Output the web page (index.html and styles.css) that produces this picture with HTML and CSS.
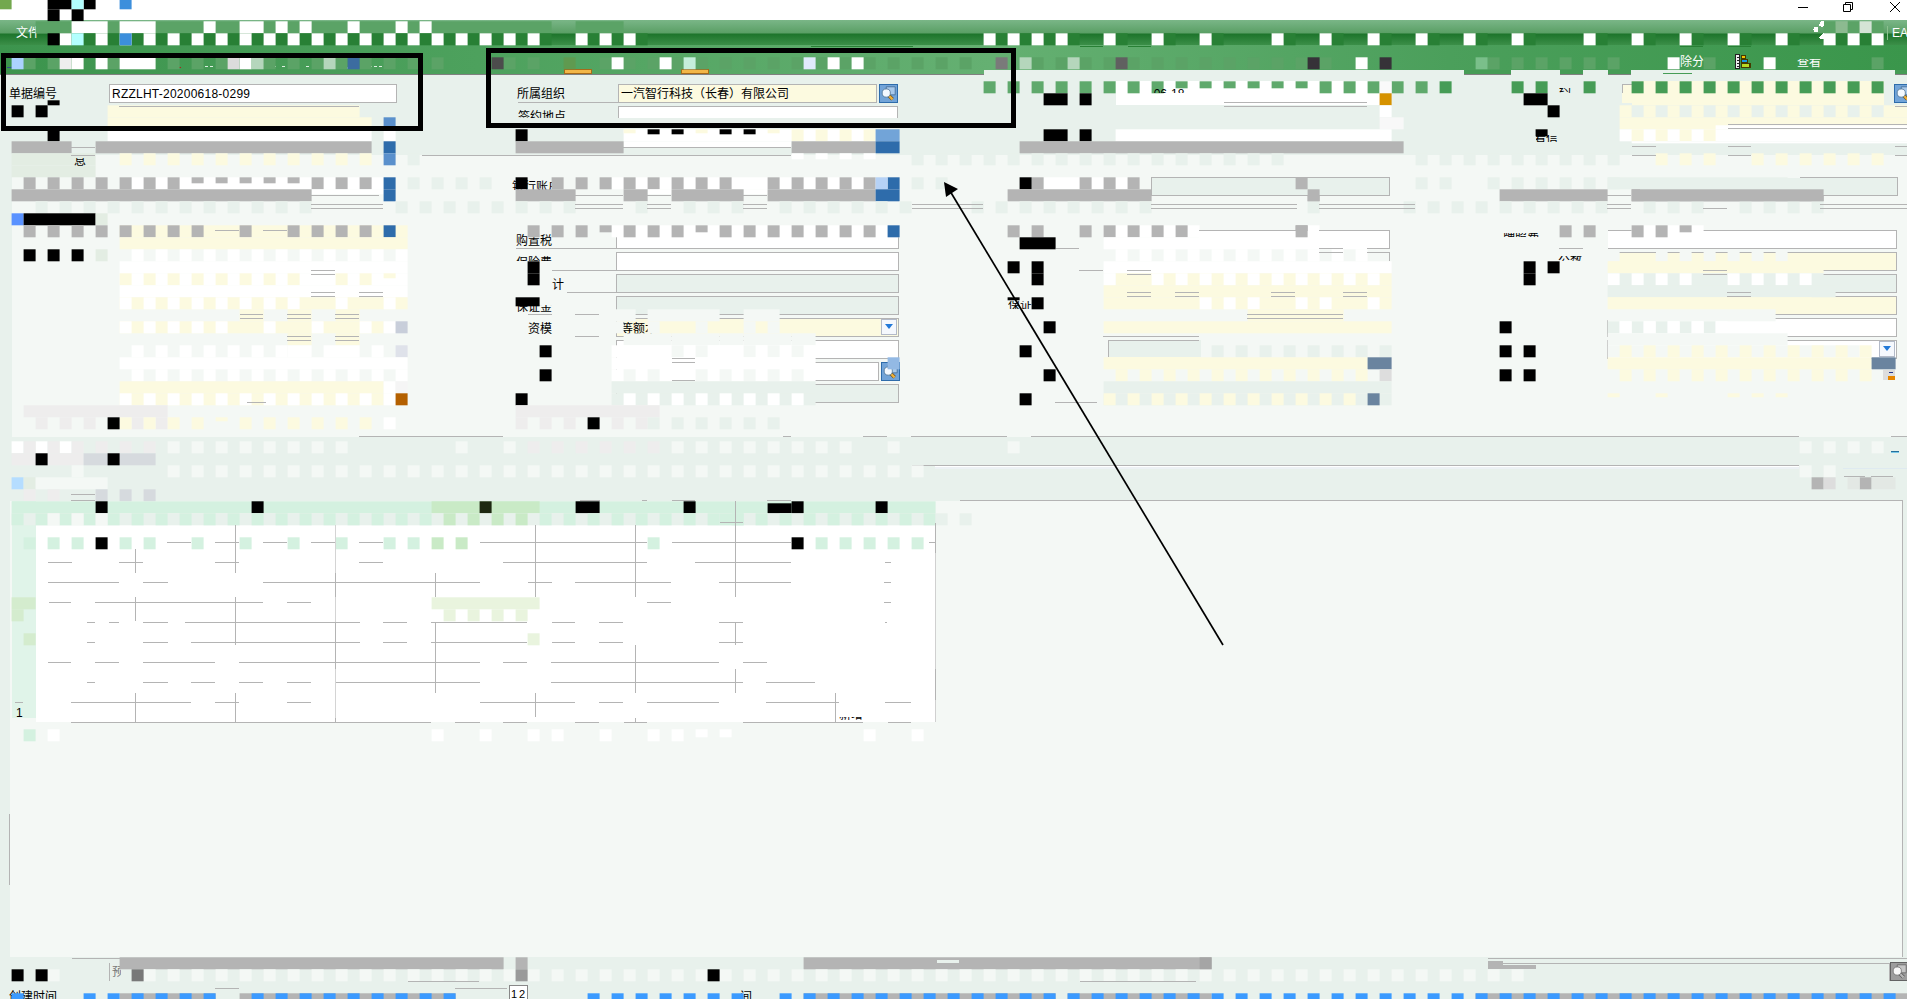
FILE: index.html
```html
<!DOCTYPE html>
<html lang="zh-CN">
<head>
<meta charset="utf-8">
<title>EAS</title>
<link rel="stylesheet" href="styles.css">
</head>
<body>
<div class="window">
  <header class="titlebar">
    <svg class="winbtns" viewBox="0 0 110 20" width="110" height="20"><g fill="none" stroke="#000" stroke-width="1"><path d="M1 7.500h10M46.500 4.500h7v7h-7zM48.500 4.500v-2h7v7h-2M93 2l10 10M103 2l-10 10"/></g></svg>
  </header>
  <nav class="menubar"><span>文件</span><span class="brand">EA</span></nav>
  <div class="toolbar"><span class="tool-a">除分</span>
    <svg width="16" height="16" viewBox="0 0 16 16"><path fill="#222" d="M0 0h5v15H0z"/><path fill="#eee" d="M1 1h3v13H1z"/><path stroke="#222" d="M2 3.500h2M2 6.500h2M2 9.500h2M2 12.500h2"/><path fill="#453a00" d="M6 1h5v4h2v4h3v5H6z"/><path fill="#f5c400" d="M7 2h3v2H7z"/><path fill="#169be8" d="M7 6h5v2H7z"/><path fill="#b8dc25" d="M7 10h7v3H7z"/></svg>
    <span class="tool-b">查看</span></div>
  <section class="head">
    <div class="hrow">
      <label class="l1">单据编号</label><div class="f f1">RZZLHT-20200618-0299</div>
      <label class="l2">所属组织</label><div class="f f2 req">一汽智行科技（长春）有限公司</div><span class="look"><svg viewBox="0 0 19 19"><use href="#lens"/></svg></span>
      <span class="look last"><svg viewBox="0 0 19 19"><use href="#lens"/></svg></span>
    </div>
    <div class="hrow second"><label>签约地点</label><div class="f"></div></div>
  </section>
  <section class="body">
    <div class="acct"><label>银行账户</label></div>
    <div class="fields">
      <div class="pair"><label class="cut">购置税</label><div class="f"></div></div><div class="f w"></div>
      <div class="pair"><label class="top">保险费</label><div class="f"></div></div><div class="f w req"></div>
      <div class="pair"><label class="ji">计</label><div class="f off"></div></div><div class="f w off"></div>
      <div class="pair"><label class="low">保证金</label><div class="f off"></div></div><div class="f w req"></div>
      <div class="pair"><label class="zi">资模</label><div class="f req sel"><span>等额本</span><b class="drop"></b></div></div><div class="f w"></div>
      <div class="pair"><label></label><div class="f"></div></div><div class="f w open"><b class="drop"></b></div>
      <div class="pair"><label></label><div class="f short"></div><span class="look"><svg viewBox="0 0 19 19"><use href="#lens"/></svg></span></div><div></div>
      <div class="pair"><label></label><div class="f off"></div></div><div></div>
    </div>
  </section>
  <section class="tabs"></section>
  <section class="sheet"></section>
  <footer class="foot"><div class="frow"><span class="small">预</span><span class="look grey"><svg viewBox="0 0 19 19"><use href="#lens"/></svg></span></div>
  <div class="frow times"><span>创建时间</span><span class="cal">12</span><span class="t2">间</span></div></footer>
</div>
<svg width="0" height="0" class="defs"><defs><g id="lens"><path d="M7 2h10v9H7z" fill="#a9c9ea" stroke="#46709c"/><path d="M10 12l4 4" stroke="#6b4a1c" stroke-width="4"/><path d="M10 12l4 4" stroke="#f0b238" stroke-width="2.600"/><circle cx="7" cy="9" r="4.600" fill="#f3f9ff" stroke="#5b7d9c"/></g></defs></svg>
<svg id="mosaic" class="overlay" width="1907" height="999" shape-rendering="crispEdges"></svg>
<svg class="overlay" width="1907" height="999">
  <g class="frag">
    <svg x="1143" y="89" width="60" height="4"><text x="0" y="9">..-06-18</text></svg>
    <svg x="1559" y="88" width="14" height="5"><text x="0" y="7">约</text></svg>
    <svg x="1536" y="135" width="22" height="7"><text x="-2" y="8">看信</text></svg>
    <svg x="71" y="158" width="16" height="8"><text x="3" y="7">息</text></svg>
    <svg x="1503" y="233" width="36" height="4"><text x="0" y="9">牌照费</text></svg>
    <svg x="1558" y="256" width="28" height="5"><text x="0" y="9">公数</text></svg>
    <svg x="1008" y="301" width="24" height="8"><text x="0" y="9">保证</text></svg>
    <svg x="839" y="717" width="24" height="3"><text x="0" y="2">新增</text></svg>
    <text x="16" y="717">1</text>
  </g>
  <g fill="none" stroke="#000" stroke-width="5"><rect x="3.500" y="55.500" width="417" height="73"/><rect x="488.500" y="50.500" width="525" height="75"/></g>
  <path d="M950 191L1223 645" stroke="#000" stroke-width="1.700"/><path d="M944 182l14 7-12 8z"/>
</svg>
<script src="mosaic.js"></script>
</body>
</html>
```
FILE: styles.css
```css
*{box-sizing:border-box}
body{margin:0;width:1907px;height:999px;overflow:hidden;background:#e8f1ec;font:12px/14px "Liberation Sans","Noto Sans CJK SC",sans-serif;color:#000}
.window{display:flex;flex-direction:column;width:1907px;height:999px}
.titlebar{height:20px;background:#fff;display:flex;justify-content:flex-end}
.winbtns{margin-right:0}
.menubar{height:25px;padding:6px 0 0 16px;display:flex;justify-content:space-between;color:#fff;background:linear-gradient(#7ab687 0,#5a9f65 13px,#1d742b 14px,#3b8f48 25px)}
.brand{width:20px;border-left:1px solid #8bc18f;padding-left:4px;overflow:hidden;white-space:nowrap;height:14px}
.toolbar{height:30px;display:flex;align-items:flex-start;padding:9px 0 0 1680px;color:#fff;background:linear-gradient(90deg,#3c944d,#4da15d 25%,#65b072 52%,#4b9f5b 76%,#3a964b);border-bottom:1px solid #808080}
.toolbar span{padding-top:1px}
.toolbar svg{margin-left:31px}
.tool-b{margin-left:46px;clip-path:inset(5px 0 0 0)}
.head{height:80px;padding-top:9px}
.hrow{display:flex;height:19px;align-items:center}
.f{height:19px;border:1px solid #b4b4b4;background:#fff;padding:2px 2px;white-space:nowrap}
.req{background:#fcfae0}
.off{background:#e8f1ec}
.l1{width:101px;padding:1px 0 0 9px}
.f1{width:288px;margin-left:8px;letter-spacing:.24px}
.l2{width:101px;padding-top:1px;margin-left:120px}
.f2{width:259px}
.look{flex:none;width:19px;height:19px;border:1px solid #2e6cab;background:#72a4d8;margin-left:2px;display:block}
.look svg{display:block;width:17px;height:17px}
.look.last{margin-left:996px;margin-right:-10px}
.grey{filter:grayscale(1)}
.second{padding-left:518px;margin-top:3px;height:12px;overflow:hidden;align-items:flex-start}
.second label{width:100px;padding-top:4px}
.second .f{width:280px}
.body{height:282px;margin-left:12px;background:#f4f8f5}
.acct{height:75px;padding:25px 0 0 500px}
.acct label{display:block;width:50px;height:10px;overflow:hidden}
.fields{display:grid;grid-template-columns:1091px 291px;grid-auto-rows:19px;row-gap:3px;padding-left:504px}
.fields .w{width:290px}
.pair{display:flex}
.pair label{width:100px;padding-top:4px}
.pair .f{width:283px}
.pair .short{width:263px}
.pair .cut{clip-path:inset(4px 0 3px 0)}
.pair .top{clip-path:inset(0 0 10px 0)}
.pair .ji{padding-left:36px}
.pair .low{clip-path:inset(9px 0 0 0)}
.pair .zi{padding-left:12px}
.sel,.open{display:flex;justify-content:space-between;padding:0 1px 0 4px}
.sel span{padding-top:3px}
.open{justify-content:flex-end}
.drop{width:16px;height:16px;border:1px solid #b3bac8;background:#f5f8fd;display:flex;align-items:center;justify-content:center}
.drop::after{content:"";border:4px solid transparent;border-top:5px solid #2379d8;border-bottom:0}
.tabs{height:64px;background:#e8f1ec}
.sheet{height:457px;margin-left:10px;margin-right:4px;background:#f4f8f5;border-right:1px solid #b4b4b4}
.foot{height:42px}
.frow{display:flex;justify-content:space-between;height:20px;padding:5px 0 0 112px}
.small{width:9px;overflow:hidden;color:#777;padding-top:3px;height:18px}
.frow .look{margin-right:-2px}
.times{padding:13px 0 0 9px;justify-content:flex-start}
.times span{white-space:nowrap;width:50px}
.times .cal{margin-left:450px;width:19px;border:1px solid #888;background:#fff;font-size:11px;letter-spacing:2px;height:18px;margin-top:-5px;padding:1px 0 0 1px}
.times .t2{margin-left:212px}
.defs{display:block;height:0}
.overlay{position:absolute;left:0;top:0}
.frag text{font:12px "Liberation Sans","Noto Sans CJK SC",sans-serif}
```
FILE: mosaic.js
```javascript
const C={k:'#000',w:'#fff',c:'#b3ffff',b:'#3c8fdc',g:'#5ba366',d:'#288035',G:'#b4b4b4',y:'#fcfae0',B:'#2e6cab',M:'#5a90cc',p:'#f4f8f5',e:'#e8f1ec',E:'#eeeded',m:'#d4f1e0',n:'#c9eac6',l:'#e9f4de',s:'#6a849f',t:'#d6dade',v:'#e3ede3',a:'#d4ecce',L:'#3b9aff',r:'#469c56',q:'#5fa96c'};
const svg=document.getElementById('mosaic'),NS=svg.namespaceURI;
function rect(x,y,w,h,f,soft){const r=document.createElementNS(NS,'rect');for(const [k,v] of Object.entries({x,y,width:w,height:h,fill:C[f]||f}))r.setAttribute(k,v);if(soft)r.setAttribute('shape-rendering','geometricPrecision');svg.append(r)}
// Cells are 12px square; a spec is a list of "a", "a-b" or "a-b/step".
function cells(j,f,spec,h=12,dy=0){for(const s of spec.split(',')){const [r,st]=s.split('/'),[a,b=a]=r.split('-').map(Number);const y=9.3+j*12+dy;if(st)for(let k=a;k<=b;k+=+st)rect(k*12-.4,y,12,h,f,1);else rect(a*12-.4,y,(b-a+1)*12,h,f,1)}}
const H=(y,s)=>s.split(',').forEach(p=>{const [a,b]=p.split('-').map(Number);rect(a,y,b-a,1,'G')});
const V=(x,s)=>s.split(',').forEach(p=>{const [a,b]=p.split('-').map(Number);rect(x,a,1,b-a,'G')});
const box=(x,y,w,h,f)=>{rect(x,y,w,h,'G');rect(x+1,y+1,w-2,h-2,f)};
// Area grounds
rect(984,70,923,5,'e');
for(const [x,w] of [[1464,47],[1560,23],[1608,23],[1895,12]]){rect(x,70,w,4,'r');rect(x,74,w,1,'#808080')}
rect(1663,73,29,1,'r');
rect(811,46,102,1,'d');rect(1080,46,23,1,'d');rect(1128,46,23,1,'d');rect(1680,46,23,1,'d');rect(1728,46,23,1,'d');
rect(564,69,28,5,'#a76b19');rect(565,70,26,3,'#f2b648');rect(681,69,28,5,'#a76b19');rect(682,70,26,3,'#f2b648');
// Toolbar caption remnants
for(const x of [192,196,200,205,210,273,282,290,306,312,320,364,369,374,379])rect(x,66,3,1,'#dff0e2');
rect(7,67,13,1,'#34508c');rect(116,68,13,1,'#34508c');rect(179,67,2,1,'#b02020');rect(240,67,8,2,'#a58a8e');rect(345,67,10,2,'#a9cdf5');
rect(1116,81,264,24,'w');H(84,'1622-1632');rect(1622,85,200,18,'y');V(1622,'84-93');rect(1632,81,252,24,'y');
H(102,'518-618');
rect(1604,225,4,95,'p');
const rows=[
[-1,'#73a84e','0'],[-1,'k','4-5,7'],[-1,'c','6'],[-1,'b','10'],[0,'k','4,6'],
[1,'g','3-5,9,13-16,18-19,22,24,26-28,30-32,34,36-45,48-51,152,154,156'],[1,'w','6-8,10-12,17,20-21,23,25,29,33,35'],[1,'#8cba90','153'],[1,'#d4e4d6','155'],
[2,'d','7-45/2,49-53/2,83-89/2,93,97,101,107-119/4,123,127,133-149/4,153,155'],[2,'w','5,8-44/2,48-52/2,82-88/2,92,96,100,106-122/4,126,132-148/4,152-156/2'],[2,'k','4'],[2,'c','6'],[2,'b','10'],
[4,'g','2,4,9,14-36/2,42,44,50-80/2,86-110/2,124-134/2,142,156'],[4,'#acd2ff','1'],[4,'#eee','5'],[4,'w','6,8,10-12,20,51,55,69,71,113,139,147'],[4,'#dcdcdc','19'],[4,'#b5d6bc','21,27,85,89'],[4,'#3c6ca0','29'],[4,'#4c4c4c','41'],[4,'#5f9a50','47'],[4,'#c5eedb','57'],[4,'#e1eafc','67'],[4,'#7a7a7a','83'],[4,'#606060','93'],[4,'#363238','109,115'],[4,'#7abf8a','123'],
[6,'q','82-96/2,110-118/2'],[6,'q','98-108/2',7],[6,'r','120,126,128,132,136-156/2'],[6,'#fafafa','115'],
[7,'k','87-88,90,127-128'],[7,'#d69200','115'],[7,'k','4',5,7],[8,'w','115'],[9,'#f8f8f8','115-116'],
[8,'y','9-29,135-158'],[8,'e','136-156/2'],[8,'k','1,3,129'],[9,'y','9-30,135-158'],[9,'M','32'],[9,'w','143-158',4,8],
[10,'k','4,43,87-88,90'],[10,'w','9-30,32,52-72,93-115,135-158'],[10,'y','66-72/2,136-142/2'],[10,'y','52,58,64',4],[10,'k','54,56,60,62',5],[10,'k','128',7],[10,'#72a4d8','73-74'],
[11,'w','52-65',6],[11,'w','136-158',2],[11,'G','1-5,8-30,43-51,66-72,85-116'],[11,'B','32,73-74'],
[12,'v','1-7'],[13,'v','1-7'],[12,'y','10-30/2,138-142/2,146-156/2'],[12,'M','32'],[12,'w','66-72/2',6],[12,'e','34,76-106/2,118-134/2'],
[14,'w','11-31,51-72,87-93'],[14,'e','34-38/2,40,76,78,118,120,124-134/2,134-148'],[14,'G','2-14/2,26-30/2,46,48,50-60/2,64-72/2,86,90-94/2'],[14,'G','16-24/2,108',6],[14,'B','32,74'],[14,'k','43,85'],[14,'#b6d2f6','73'],
[15,'w','26-31,54-55,62-63',5],[15,'G','1-25,43-47,52-53,56-61,64-72,84-95,109,125-133,136-151'],[15,'B','32,73-74'],
[16,'e','3-25/2,33-39/2,41-47/2,53,57-61/2,65-75/2,81-95/2,109,117,119-133/2,137-141/2,145-151/2'],
[17,'#5a92ff','1'],[17,'k','2-7'],[17,'v','8'],
[18,'y','10-33'],[18,'w','51-74,92-99,109,136-141'],[18,'G','2-16/2,20,24-30/2,44-48/2,52-56/2,60-72/2,84,86,90-98/2,108,130,132,136,138'],[18,'G','50,58,140',7],[18,'B','32,74'],
[19,'y','10-33'],[19,'k','85-87'],[19,'w','92-114'],[20,'w','11-33/2,93-113/2'],[20,'k','2-6/2'],[20,'v','8'],[20,'p','134,138-148/2'],
[21,'w','10-33,92-115'],[21,'k','44,84,86,127,129'],[21,'y','134-151'],
[22,'w','10-33'],[22,'y','10-24/2,28,30,93-115'],[22,'y','32',5],[22,'w','92,96-114/2'],[22,'k','44,86,127'],[22,'e','134-151'],[22,'w','134-140/2,144-150/2'],
[23,'w','10-33'],[23,'y','92-115'],[23,'e','134-152'],
[24,'y','10-33,92-115,134-150'],[24,'w','10-24/2,28,32,100-104/2,108,110,114'],[24,'k','86'],[24,'k','43-44',9],[24,'k','84',3],
[25,'p','51-52,54-59,62-64,134-147'],[25,'y','20-21,24-25,28-29,104-111'],
[26,'y','10-31,92-115'],[26,'w','10-18/2,22,26,30-32/2'],[26,'#c8ceda','33'],[26,'p','51,54,58,62,64'],[26,'e','134-142/2'],[26,'w','135-143/2'],[26,'k','87,125'],
[27,'p','52-55,60-61,66-67,134-148'],[27,'p','56-59,62-65'],[27,'y','24-25,28-29'],
[28,'w','11-23/2,24-25,27-29,31,51-67'],[28,'#dfe2ea','33'],[28,'p','56,58,62-66/2,134-154'],[28,'e','101-115/2'],[28,'y','135-155/2'],[28,'k','45,85,125,127'],
[29,'w','10-33,51-67'],[29,'#93b9e4','74'],[29,'y','92-113,134-155'],[29,'s','114-115,156-157'],
[30,'w','11-33/2,51-67'],[30,'p','52,54,58-66/2'],[30,'y','93-113/2,135-155/2'],[30,'#ddd','115'],[30,'k','45,87,125,127'],
[31,'y','10-31'],[31,'w','32'],[31,'#f5f5f5','33'],[31,'e','51-67,92-115'],
[32,'e','51-67,92-115'],[32,'y','10-31,92-112/2'],[32,'w','10-32/2,52-66/2'],[32,'#b46000','33'],[32,'s','114'],[32,'k','43,85'],[32,'y','134,138,144-148/2',4],
[33,'E','2-13,43-54'],[34,'E','3-7/2,11,13,43-47/2,51,53'],[34,'y','10-16/2,20-30/2'],[34,'y','18',4],[34,'e','54-64/2'],[34,'w','32'],[34,'k','9,49'],
[36,'w','1-5/2'],[36,'E','2-12/2,44-54/2'],[36,'p','14-28/2,38,42,56-70/2,74,84,150-156/2'],
[37,'E','1-6'],[37,'t','7-12'],[37,'k','3,9']];
rows.forEach(r=>cells(...r));
[[102,'119-359,1224-1367'],[106,'119-359,1224-1367,1895-1907'],[124,'1728-1907'],[128,'1728-1907'],[147,'71-95,623-791'],[155,'71-95,422-480,480-791,1632-1656,1728-1751,1895-1907'],[146,'1632-1656,1728-1751,1895-1907'],
[204,'311-383,575-623,647-671,743-767,912-983,1151-1297,1319-1415,1607-1631,1820-1907'],[208,'311-383,575-623,647-671,743-767,912-983,1151-1297,1319-1415,1607-1631,1703-1727,1820-1907'],[195,'311-379,575-623,647-671,743-767,1607-1631'],
[230,'215-239,263-287,1199-1296,1319-1390'],[248,'516-616,1056-1079,1319-1343,1367-1390,1559-1583,1632-1656'],[252,'1319-1343,1367-1390,1632-1656'],[270,'311-335,552-616,1079-1103,1127-1151,1703-1727'],[274,'311-335,1127-1151,1703-1727'],
[292,'311-335,359-383,567-616,1127-1151,1175-1199,1271-1295,1343-1367,1727-1751'],[296,'311-335,359-383,1127-1151,1175-1199,1271-1295,1343-1367,1727-1751'],[314,'240-263,287-311,335-359,528-552,575-599,1247-1343'],[318,'240-263,287-311,335-359,1247-1343'],[336,'287-311,335-359,575-599,1103-1199'],[340,'287-311,335-359'],
[358,'672-695'],[362,'672-695'],[380,'672-695'],[402,'247-266,1055-1097'],[436,'359-456,456-503,783-791,863-887,911-1007,1031-1799,1891-1907'],[465,'912-1799']].forEach(a=>H(...a));
V(1389,'177-196,230-249,252-261');rect(1199,231,190,17,'w');cells(18,'G','108');
box(1151,177,239,19,'e');cells(14,'G','108');box(1800,177,98,19,'e');rect(1640,178,161,17,'e');cells(15,'G','109,136-151');
box(1108,340,92,19,'e');rect(1108,357,92,12,'y');rect(1199,340,2,17,'e');
rect(935,466,864,1,'w');rect(935,467,864,2,'#edf2f5');rect(1843,468,64,1,'#dfeaf0');rect(1891,451,8,1,'#256f9c');rect(1891,452,8,1,'#7bc8e8');
rect(1883,370,12,10,'#ddd');rect(1888,376,7,4,'#e78600');rect(1889,372,4,1,'#23358b');
[[38,'p','6,14-38/2,40-76/2,150,152'],[39,'#b5ddff','1'],[39,'v','2'],[39,'p','3-8'],[39,'G','151,155'],[39,'#ddd','152'],[39,'#e3e8e4','154,156-157'],[40,'E','2,4'],[40,'t','8-12/2']].forEach(r=>cells(...r));
H(494,'71-95');H(500,'71-95,580-600,642-647,672-695,767-791,960-1903');H(476,'1844-1865,1871-1893');
// Entry table
rect(12,501,24,217,'#e0f4e9');rect(36,525,899,197,'w');
[[41,'m','1-77'],[41,'n','36-44'],[41,'k','8,21,48-49,57,66,73'],[41,'k','64-65',10,2],[41,'#1e2811','40'],
[42,'e','1-77'],[42,'m','1-35/2,45-77/2,60-61'],[42,'n','37-43/2'],[42,'p','4,6,8'],[42,'e','78,80'],
[44,'m','2-6/2,10,12,16,20,24,28,32,34,54,68-76/2'],[44,'n','36,38'],[44,'k','8,66'],
[49,'a','1-2'],[49,'l','36-44'],[50,'a','1'],[50,'l','37-43/2'],[52,'a','2'],[52,'l','44']].forEach(r=>cells(...r));
[[522,'720-743'],[542,'167-191,215-239,263-287,311-335,359-383,480-647,672-791,929-935'],[562,'48-72,119-143,215-239,359-383,503-647,695-791,885-891'],[582,'48-119,143-168,263-480,528-552,575-671,719-791,884-891'],[602,'49-71,95-263,287-311,647-671,884-891'],[622,'87-95,109-119,143-168,185-360,383-407,431-527,552-575,599-623,719-743,885-887'],[642,'87-95,143-168,191-360,383-407,431-527,552-575,599-623,719-743'],[662,'48-71,95-119,143-215,239-480,503-527,551-719,743-767'],[682,'87-95,143-168,191-215,239-263,287-311,335-480,551-743,766-815'],[702,'15-23,71-191,215-239,287-311,480-575,599-623,647-719,766-839,885-911'],[722,'71-431,455-480,503-527,575-599,624-647,743-863,888-911']].forEach(a=>H(...a));
V(135,'549-573,597-621,693-722');V(235,'525-573,597-645,693-722');rect(335,525,1,197,'#d4d4d4');V(335,'573-597,622-669,718-722');V(435,'573-597,622-693');V(535,'525-597,693-717');V(635,'525-597,645-693,718-722');V(735,'501-597,622-645,669-693');V(835,'693-722');rect(935,523,1,199,'#d0d0d0');V(935,'523-553,669-700');
[[60,'m','2'],[60,'w','4,36,40,44,46,50,54,56,72,76'],[60,'w','58,60',8]].forEach(r=>cells(...r));
V(9,'814-885');
// Status strip
[[79,'G','10-41,43,67-100'],[80,'p','4,12-42/2,44-58/2,60-66/2,68-126/2'],[80,'k','1,3,59'],[80,'#787878','11'],[80,'#9a9a9a','43'],[79,'#a5a5a5','100'],
[82,'G','10-17,20-37,67-87,89-100,123-158'],[82,'L','1,7,9-17/2,21-37/2,49-61/2,65-87/2,89-121/2,123-158/2']].forEach(r=>cells(...r));
rect(937,960,22,3,'e');H(958,'72-120,1488-1907');H(963,'1503-1889');V(1889,'963-981');rect(1488,961,15,8,'G');rect(1503,965,33,4,'G');H(981,'408-479,1080-1196');H(988,'215-239,455-507');V(109,'963-981');
const dots=document.createElementNS(NS,'g');dots.innerHTML='<circle cx="1816" cy="29.500" r="2.500"/><path d="M1819 25q3-6 5-4v5q-3 2-5-1M1819 37l5-4v6q-4 1-5-2"/>';dots.setAttribute('fill','#fff');svg.append(dots);
```
